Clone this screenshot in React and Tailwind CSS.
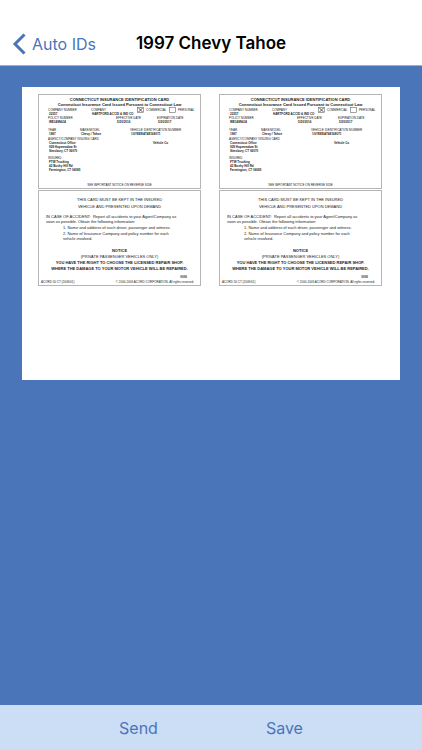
import React from "react";

const cards = [
  { id: "left" },
  { id: "right" },
];

// small caption with its value underneath
function Field({ label, value }) {
  return (
    <div>
      <div>{label}</div>
      <div className="pl-px font-bold">{value}</div>
    </div>
  );
}

function CheckField({ id, label, checked }) {
  return (
    <div className="-mt-px">
      <input
        id={id}
        type="checkbox"
        defaultChecked={checked}
        className="sr-only"
      />
      <label htmlFor={id} className="flex items-center gap-[2px]">
        <svg viewBox="0 0 14 12" className="h-[6px] w-[7px] shrink-0" aria-hidden="true">
          <rect x="0.8" y="0.8" width="12.4" height="10.4" fill="none" stroke="#666" strokeWidth="1.2" />
          {checked && <path d="M3 2 L11 10 M11 2 L3 10" stroke="#222" strokeWidth="1.5" />}
        </svg>
        {label}
      </label>
    </div>
  );
}

function CardFront({ id }) {
  return (
    <section className="border border-[#b5b5b5] pt-[2px] pb-px text-[3px] leading-[4px]">
      <h2 className="text-center text-[4px] leading-[5px] font-bold whitespace-nowrap">
        CONNECTICUT INSURANCE IDENTIFICATION CARD
        <br />
        Connecticut Insurance Card Issued Pursuant to Connecticut Law
      </h2>

      <div className="pl-[9px] whitespace-nowrap">
        <div className="mt-px grid grid-cols-[43fr_46fr_32fr_31fr]">
          <Field label="COMPANY NUMBER" value="22357" />
          <Field label="COMPANY" value="HARTFORD ACCID & IND CO" />
          <CheckField id={id + "-commercial"} label="COMMERCIAL" checked />
          <CheckField id={id + "-personal"} label="PERSONAL" checked={false} />
        </div>

        <div className="grid grid-cols-[68fr_41fr_43fr]">
          <Field label="POLICY NUMBER" value="WE349N634" />
          <Field label="EFFECTIVE DATE" value="5/20/2016" />
          <Field label="EXPIRATION DATE" value="5/20/2017" />
        </div>

        <div className="mt-[4px] grid grid-cols-[32fr_50fr_70fr]">
          <Field label="YEAR" value="1997" />
          <Field label="MAKE/MODEL" value="Chevy / Tahoe" />
          <Field label="VEHICLE IDENTIFICATION NUMBER" value="1GYEEEAT4E168071" />
        </div>

        <div className="mt-px">AGENCY/COMPANY ISSUING CARD</div>
        <div className="grid grid-cols-[105fr_47fr] font-bold">
          <address className="pl-px not-italic">
            Connecticut Office
            <br />
            929 Hopmeadow St
            <br />
            Simsbury, CT 06070
          </address>
          <div>Vehicle Co</div>
        </div>

        <div className="mt-[3px]">INSURED</div>
        <address className="pl-px font-bold not-italic">
          FTW Trucking
          <br />
          42 Bushy Hill Rd
          <br />
          Farmington, CT 06085
        </address>
      </div>

      <p className="mt-[11px] text-center">SEE IMPORTANT NOTICE ON REVERSE SIDE</p>
    </section>
  );
}

function CardBack() {
  return (
    <section className="mt-px border border-[#b5b5b5] pt-[5px] text-[4px] leading-[5px]">
      <p className="text-center leading-[7px]">
        THIS CARD MUST BE KEPT IN THE INSURED
        <br />
        VEHICLE AND PRESENTED UPON DEMAND
      </p>

      <div className="mt-[4px] pl-[7px] whitespace-nowrap">
        <p>
          IN CASE OF ACCIDENT:&nbsp; Report all accidents to your Agent/Company as
          <br />
          soon as possible. Obtain the following information:
        </p>
        <ol className="mt-px pl-[17px]">
          <li>1. Name and address of each driver, passenger and witness.</li>
          <li className="mt-px">
            2. Name of Insurance Company and policy number for each
            <br />
            vehicle involved.
          </li>
        </ol>
      </div>

      <div className="mt-[7px] text-center leading-[6px] font-bold whitespace-nowrap">
        <h3>NOTICE</h3>
        <p className="font-normal">(PRIVATE PASSENGER VEHICLES ONLY)</p>
        <p>YOU HAVE THE RIGHT TO CHOOSE THE LICENSED REPAIR SHOP.</p>
        <p>WHERE THE DAMAGE TO YOUR MOTOR VEHICLE WILL BE REPAIRED.</p>
      </div>

      <div className="mt-[3px] text-[3px] leading-[5px]">
        <p className="pr-[13px] text-right font-bold">0000</p>
        <div className="flex justify-between pr-[6px] pl-[2px]">
          <span>ACORD 50 CT (2009/01)</span>
          <span>© 2000-2009 ACORD CORPORATION. All rights reserved.</span>
        </div>
      </div>
    </section>
  );
}

export default function App() {
  return (
    <div className="flex min-h-screen flex-col bg-[#4a75b9] font-['Inter',sans-serif]">
      <header className="grid grid-cols-[1fr_auto_1fr] items-center border-b border-[#a9b0bb] bg-white px-3 pt-[22px]">
        <a href="#auto-ids" className="flex h-[43px] items-center gap-[6px] text-[16px] text-[#4a75b9]">
          <svg viewBox="0 0 14 22" className="h-[22px] w-[14px]" aria-hidden="true">
            <path d="M12.5 1.5 L3 11 L12.5 20.5" fill="none" stroke="currentColor" strokeWidth="3" />
          </svg>
          Auto IDs
        </a>
        <h1 className="text-[17px] font-semibold text-black">1997 Chevy Tahoe</h1>
        <span />
      </header>

      <main className="flex-1 px-[22px] pt-[21px]">
        <div className="grid grid-cols-2 gap-[18px] bg-white pt-[7px] pr-[18px] pb-[94px] pl-4 font-['Liberation_Sans',Arial,sans-serif] text-[#222]">
          {cards.map((card) => (
            <article key={card.id}>
              <CardFront id={card.id} />
              <CardBack />
            </article>
          ))}
        </div>
      </main>

      <footer className="flex h-[45px] items-center justify-center gap-[108px] bg-[#ccddf6] text-[16px] text-[#4a75b9]">
        <button type="button">Send</button>
        <button type="button">Save</button>
      </footer>
    </div>
  );
}
